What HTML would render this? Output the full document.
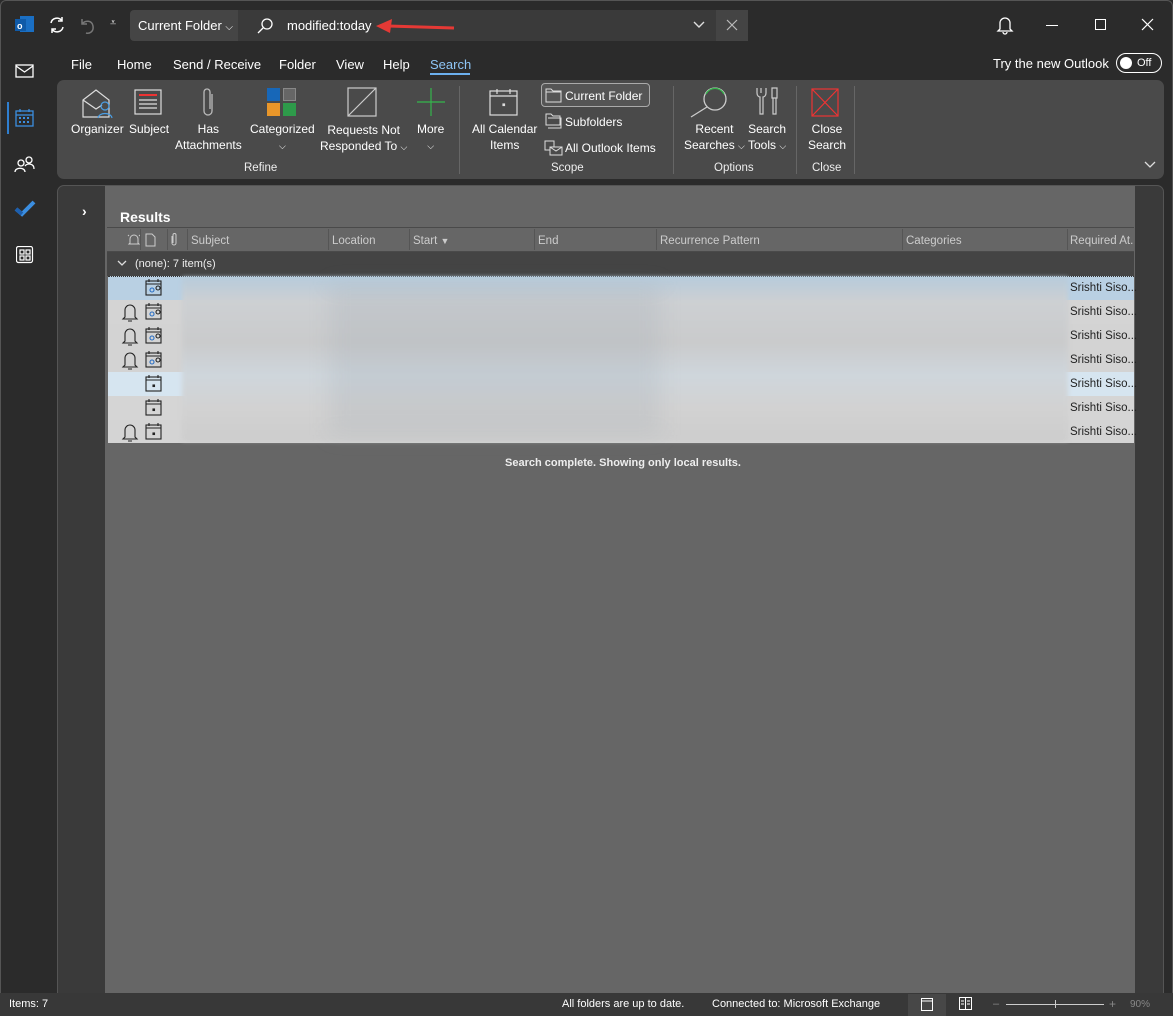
<!DOCTYPE html>
<html><head><meta charset="utf-8"><style>
*{box-sizing:border-box;margin:0;padding:0}
body{width:1173px;height:1016px;background:#2b2b2b;font-family:"Liberation Sans",sans-serif;color:#fff;position:relative;overflow:hidden;font-size:12px}
.a{position:absolute}
.tab{position:absolute;top:57px;font-size:13px;color:#fff}
.lbl{position:absolute;font-size:12px;color:#fff;text-align:center;line-height:16px;white-space:nowrap}
.grp{position:absolute;top:162px;font-size:11.5px;color:#eee}
.sep{position:absolute;top:86px;width:1px;height:88px;background:#666}
.hdr{position:absolute;top:235px;font-size:11.5px;color:#ccc}
.hsep{position:absolute;top:229px;width:1px;height:21px;background:#555}
.row{position:absolute;left:108px;width:1026px;height:24px}
.srs{position:absolute;left:1070px;font-size:11.5px;color:#222}
</style></head><body>
<div class="a" style="left:0;top:0;width:1173px;height:1016px;border:1px solid #555;border-radius:6px 6px 0 0"></div>
<svg class="a" style="left:14px;top:15px" width="22" height="20"><rect x="6" y="1" width="14" height="16" fill="#1a6fc4"/><rect x="1" y="4" width="11" height="12" fill="#0f5aa8"/><text x="3" y="14" font-size="9" fill="#fff" font-family="Liberation Sans" font-weight="bold">o</text></svg>
<svg class="a" style="left:47px;top:15px" width="20" height="20" fill="none" stroke="#fff" stroke-width="1.5"><path d="M4 8a6 6 0 0 1 11-2M16 12a6 6 0 0 1-11 2M15 2v4h-4M5 18v-4h4"/></svg>
<svg class="a" style="left:77px;top:15px" width="20" height="20" fill="none" stroke="#777" stroke-width="1.5"><path d="M5 4v5h5M5 9c3-4 10-4 11 2s-4 8-7 7"/></svg>
<div class="a" style="left:110px;top:17px;font-size:11px;color:#ddd">⩡</div>
<div class="a" style="left:130px;top:10px;width:108px;height:31px;background:#454545;border-radius:4px 0 0 4px;font-size:13px;padding:8px 0 0 8px">Current Folder <span style="font-size:10px">⌵</span></div>
<div class="a" style="left:238px;top:10px;width:510px;height:31px;background:#3a3a3a;border-radius:0 4px 4px 0"></div>
<div class="a" style="left:716px;top:10px;width:32px;height:31px;background:#444"></div>
<svg class="a" style="left:255px;top:16px" width="20" height="20" fill="none" stroke="#fff" stroke-width="1.3"><circle cx="12" cy="8" r="5"/><path d="M8 12l-5 5"/></svg>
<div class="a" style="left:287px;top:18px;font-size:13px;color:#fff">modified:today</div>
<svg class="a" style="left:374px;top:18px" width="84" height="16"><path d="M80 10L14 8" stroke="#e53935" stroke-width="3"/><path d="M2 8L18 1L16 15Z" fill="#e53935"/></svg>
<svg class="a" style="left:692px;top:19px" width="14" height="12" fill="none" stroke="#ddd" stroke-width="1.4"><path d="M2 3l5 5 5-5"/></svg>
<svg class="a" style="left:726px;top:19px" width="12" height="12" stroke="#bbb" stroke-width="1.2"><path d="M1 1l10 10M11 1L1 11"/></svg>
<svg class="a" style="left:996px;top:15px" width="18" height="20" fill="none" stroke="#fff" stroke-width="1.3"><path d="M4 14V8a5 5 0 0 1 10 0v6l2 2H2zM7 17a2 2 0 0 0 4 0"/></svg>
<div class="a" style="left:1046px;top:25px;width:12px;height:1px;background:#fff"></div>
<div class="a" style="left:1095px;top:19px;width:11px;height:11px;border:1px solid #fff"></div>
<svg class="a" style="left:1141px;top:18px" width="13" height="13" stroke="#fff" stroke-width="1.2"><path d="M1 1l11 11M12 1L1 12"/></svg>
<svg class="a" style="left:15px;top:63px" width="20" height="16" fill="none" stroke="#fff" stroke-width="1.3"><rect x="1" y="2" width="17" height="12"/><path d="M1 3l8.5 6L18 3"/></svg>
<div class="a" style="left:7px;top:102px;width:2px;height:32px;background:#2f7fd0"></div>
<svg class="a" style="left:15px;top:108px" width="20" height="20" fill="none" stroke="#3b8ee0" stroke-width="1.3"><rect x="1" y="3" width="17" height="15"/><path d="M1 7h17M5 1v3M14 1v3"/><g fill="#3b8ee0" stroke="none"><rect x="4" y="9" width="2" height="2"/><rect x="8" y="9" width="2" height="2"/><rect x="12" y="9" width="2" height="2"/><rect x="4" y="13" width="2" height="2"/><rect x="8" y="13" width="2" height="2"/><rect x="12" y="13" width="2" height="2"/></g></svg>
<svg class="a" style="left:14px;top:154px" width="22" height="20" fill="none" stroke="#fff" stroke-width="1.3"><circle cx="7" cy="9" r="3"/><circle cx="15" cy="6" r="3"/><path d="M1 18c0-5 10-5 10 0M11 12c2-3 9-3 9 3"/></svg>
<svg class="a" style="left:14px;top:200px" width="22" height="18"><path d="M2 9l6 5L20 2" stroke="#3b8ee0" stroke-width="4" fill="none"/><path d="M2 9l6 5" stroke="#1d5fae" stroke-width="4"/></svg>
<svg class="a" style="left:16px;top:246px" width="18" height="18" fill="none" stroke="#fff" stroke-width="1.2"><rect x="0.5" y="0.5" width="16" height="16" rx="2"/><rect x="4" y="4" width="4" height="4"/><rect x="10" y="4" width="4" height="4"/><rect x="4" y="10" width="4" height="4"/><rect x="10" y="10" width="4" height="4"/></svg>
<div class="tab" style="left:71px">File</div>
<div class="tab" style="left:117px">Home</div>
<div class="tab" style="left:173px">Send / Receive</div>
<div class="tab" style="left:279px">Folder</div>
<div class="tab" style="left:336px">View</div>
<div class="tab" style="left:383px">Help</div>
<div class="tab" style="left:430px;color:#8ec5f5">Search</div>
<div class="a" style="left:430px;top:73px;width:40px;height:2px;background:#6cb0ef"></div>
<div class="a" style="left:993px;top:56px;font-size:13px">Try the new Outlook</div>
<div class="a" style="left:1116px;top:53px;width:46px;height:20px;border:1px solid #fff;border-radius:10px"><div class="a" style="left:3px;top:3px;width:12px;height:12px;border-radius:6px;background:#fff"></div><span class="a" style="left:20px;top:3px;font-size:11px">Off</span></div>
<div class="a" style="left:57px;top:80px;width:1107px;height:99px;background:#4a4a4a;border-radius:7px"></div>
<svg class="a" style="left:81px;top:88px" width="34" height="32" fill="none" stroke="#ddd" stroke-width="1.2"><path d="M2 12L15 2l13 10v17H2zM2 12l13 9 6-4"/><circle cx="24" cy="18" r="4" stroke="#4a9fe6"/><path d="M17 30c1-6 13-6 14 0" stroke="#4a9fe6"/></svg>
<div class="lbl" style="left:71px;top:121px">Organizer</div>
<svg class="a" style="left:134px;top:88px" width="30" height="30" fill="none" stroke="#ddd" stroke-width="1.2"><rect x="1" y="2" width="26" height="24"/><path d="M5 7h18" stroke="#e33" stroke-width="2"/><path d="M5 12h18M5 16h18M5 20h18"/></svg>
<div class="lbl" style="left:129px;top:121px">Subject</div>
<svg class="a" style="left:199px;top:86px" width="20" height="32" fill="none" stroke="#bbb" stroke-width="1.3"><path d="M13 8v17a4 4 0 0 1-8 0V6a3 3 0 0 1 6 0v17"/></svg>
<div class="lbl" style="left:175px;top:121px">Has<br>Attachments</div>
<div class="a" style="left:267px;top:88px;width:13px;height:13px;background:#1767b8"></div><div class="a" style="left:283px;top:88px;width:13px;height:13px;background:#666;border:1px solid #888"></div>
<div class="a" style="left:267px;top:103px;width:13px;height:13px;background:#e8962a"></div><div class="a" style="left:283px;top:103px;width:13px;height:13px;background:#2e9a4a"></div>
<div class="lbl" style="left:250px;top:121px">Categorized<br><span style="font-size:9px">⌵</span></div>
<svg class="a" style="left:347px;top:87px" width="32" height="32" fill="none" stroke="#ccc" stroke-width="1.2"><rect x="1" y="1" width="28" height="28"/><path d="M1 29L29 1"/></svg>
<div class="lbl" style="left:320px;top:122px">Requests Not<br>Responded To <span style="font-size:9px">⌵</span></div>
<svg class="a" style="left:416px;top:87px" width="30" height="30" stroke="#35b64c" stroke-width="1.2"><path d="M15 1v28M1 15h28"/></svg>
<div class="lbl" style="left:417px;top:121px">More<br><span style="font-size:9px">⌵</span></div>
<div class="grp" style="left:244px">Refine</div>
<div class="sep" style="left:459px"></div>
<svg class="a" style="left:489px;top:88px" width="30" height="30" fill="none" stroke="#ddd" stroke-width="1.2"><rect x="1" y="3" width="27" height="24"/><path d="M1 8h27M8 1v5M21 1v5"/><rect x="14" y="16" width="1.5" height="1.5" fill="#ddd"/></svg>
<div class="lbl" style="left:472px;top:121px">All Calendar<br>Items</div>
<div class="a" style="left:541px;top:83px;width:109px;height:24px;border:1px solid #aaa;border-radius:4px;background:#555"></div>
<svg class="a" style="left:545px;top:88px" width="18" height="15" fill="none" stroke="#ddd"><path d="M1 1h5l2 2h8v11H1z"/><path d="M1 4h15"/></svg>
<div class="lbl" style="left:565px;top:88px">Current Folder</div>
<svg class="a" style="left:545px;top:113px" width="18" height="16" fill="none" stroke="#ddd"><path d="M1 1h5l2 2h7v9H1zM3 5h13v10H3"/></svg>
<div class="lbl" style="left:565px;top:114px">Subfolders</div>
<svg class="a" style="left:544px;top:139px" width="20" height="17" fill="none" stroke="#ddd"><rect x="1" y="2" width="9" height="9"/><rect x="6" y="8" width="12" height="8" fill="#4a4a4a"/><path d="M6 8l6 4 6-4"/></svg>
<div class="lbl" style="left:565px;top:140px">All Outlook Items</div>
<div class="grp" style="left:551px">Scope</div>
<div class="sep" style="left:673px"></div>
<svg class="a" style="left:688px;top:86px" width="42" height="32" fill="none" stroke="#ccc" stroke-width="1.3"><circle cx="27" cy="13" r="11" stroke="#ccc"/><path d="M18 8a10 10 0 0 1 18 0" stroke="#35b64c"/><path d="M19 21L3 31"/></svg>
<div class="lbl" style="left:684px;top:121px">Recent<br>Searches <span style="font-size:9px">⌵</span></div>
<svg class="a" style="left:755px;top:87px" width="24" height="30" fill="none" stroke="#ccc" stroke-width="1.2"><path d="M2 1v5c0 3 2 4 3 4v17h3V10c1 0 3-1 3-4V1M6 1v5M17 1h5v10h-5zM18 11v16h3V11"/></svg>
<div class="lbl" style="left:748px;top:121px">Search<br>Tools <span style="font-size:9px">⌵</span></div>
<div class="grp" style="left:714px">Options</div>
<div class="sep" style="left:796px"></div>
<svg class="a" style="left:811px;top:88px" width="28" height="29" fill="none" stroke="#e33" stroke-width="1.2"><rect x="1" y="1" width="26" height="27"/><path d="M1 1l26 27M27 1L1 28"/></svg>
<div class="lbl" style="left:808px;top:121px">Close<br>Search</div>
<div class="grp" style="left:812px">Close</div>
<div class="sep" style="left:854px"></div>
<svg class="a" style="left:1143px;top:160px" width="14" height="10" fill="none" stroke="#ddd" stroke-width="1.3"><path d="M2 2l5 5 5-5"/></svg>
<div class="a" style="left:57px;top:185px;width:1107px;height:820px;background:#3a3a3a;border:1px solid #555;border-radius:7px 7px 0 0"></div>
<div class="a" style="left:82px;top:203px;font-size:14px;font-weight:bold">›</div>
<div class="a" style="left:105px;top:186px;width:1030px;height:807px;background:#666"></div>
<div class="a" style="left:120px;top:209px;font-size:14px;font-weight:bold">Results</div>
<div class="a" style="left:107px;top:227px;width:1027px;height:1px;background:#4a4a4a"></div>
<div class="a" style="left:107px;top:251px;width:1027px;height:1px;background:#4a4a4a"></div>
<svg class="a" style="left:127px;top:232px" width="60" height="15" fill="none" stroke="#ccc"><path d="M3 11V7a4 4 0 0 1 8 0v4l1 1H2zM1 4l1-1M13 4l-1-1"/><path d="M19 2h6l3 3v9h-9z"/><path d="M45 4v7a2 2 0 0 0 4 0V3a1.5 1.5 0 0 0-3 0v8"/></svg>
<div class="hsep" style="left:140px"></div><div class="hsep" style="left:167px"></div><div class="hsep" style="left:187px"></div>
<div class="hdr" style="left:191px">Subject</div><div class="hsep" style="left:328px"></div>
<div class="hdr" style="left:332px">Location</div><div class="hsep" style="left:409px"></div>
<div class="hdr" style="left:413px">Start <span style="font-size:9px">▼</span></div><div class="hsep" style="left:534px"></div>
<div class="hdr" style="left:538px">End</div><div class="hsep" style="left:656px"></div>
<div class="hdr" style="left:660px">Recurrence Pattern</div><div class="hsep" style="left:902px"></div>
<div class="hdr" style="left:906px">Categories</div><div class="hsep" style="left:1067px"></div>
<div class="hdr" style="left:1070px">Required At.</div>
<div class="a" style="left:107px;top:252px;width:1027px;height:24px;background:#444"></div>
<svg class="a" style="left:117px;top:260px" width="10" height="8" fill="none" stroke="#ddd" stroke-width="1.3"><path d="M1 1l4 4 4-4"/></svg>
<div class="a" style="left:135px;top:258px;font-size:11px;color:#eee">(none): 7 item(s)</div>
<div class="row" style="top:276px;background:#b9d0e3;border-top:1px dotted #333"></div>
<div class="row" style="top:300px;background:#d4d4d4"></div>
<div class="row" style="top:324px;background:#d3d3d3"></div>
<div class="row" style="top:348px;background:#d3d3d3"></div>
<div class="row" style="top:372px;background:#d6e5f0"></div>
<div class="row" style="top:396px;background:#d5d5d5"></div>
<div class="row" style="top:420px;background:#d4d4d4;height:23px"></div>
<div class="a" style="left:182px;top:277px;width:886px;height:164px;background:linear-gradient(180deg,#b7cbdb 0%,#cdd0d3 15%,#cacbcc 40%,#cfd6dc 60%,#d2d2d2 80%,#cdcdcd 100%);filter:blur(2px)"></div>
<div class="a" style="left:330px;top:285px;width:330px;height:150px;background:rgba(150,160,170,.18);filter:blur(10px)"></div>
<svg class="a" style="left:118px;top:277px" width="50" height="166" fill="none" stroke="#222" stroke-width="1.1">
<g><rect x="28" y="4" width="15" height="14"/><path d="M28 7h15M31 2v3M40 2v3"/><circle cx="34" cy="13" r="2" stroke="#2a6fc4"/><circle cx="40" cy="11" r="2"/></g>
<g transform="translate(0,24)"><path d="M7 16V9a5 5 0 0 1 10 0v7l2 2H5zM10 20h4"/><rect x="28" y="4" width="15" height="14"/><path d="M28 7h15M31 2v3M40 2v3"/><circle cx="34" cy="13" r="2" stroke="#2a6fc4"/><circle cx="40" cy="11" r="2"/></g>
<g transform="translate(0,48)"><path d="M7 16V9a5 5 0 0 1 10 0v7l2 2H5zM10 20h4"/><rect x="28" y="4" width="15" height="14"/><path d="M28 7h15M31 2v3M40 2v3"/><circle cx="34" cy="13" r="2" stroke="#2a6fc4"/><circle cx="40" cy="11" r="2"/></g>
<g transform="translate(0,72)"><path d="M7 16V9a5 5 0 0 1 10 0v7l2 2H5zM10 20h4"/><rect x="28" y="4" width="15" height="14"/><path d="M28 7h15M31 2v3M40 2v3"/><circle cx="34" cy="13" r="2" stroke="#2a6fc4"/><circle cx="40" cy="11" r="2"/></g>
<g transform="translate(0,96)"><rect x="28" y="4" width="15" height="14"/><path d="M28 7h15M31 2v3M40 2v3"/><rect x="35" y="12" width="1.5" height="1.5" fill="#222"/></g>
<g transform="translate(0,120)"><rect x="28" y="4" width="15" height="14"/><path d="M28 7h15M31 2v3M40 2v3"/><rect x="35" y="12" width="1.5" height="1.5" fill="#222"/></g>
<g transform="translate(0,144)"><path d="M7 16V9a5 5 0 0 1 10 0v7l2 2H5zM10 20h4"/><rect x="28" y="4" width="15" height="14"/><path d="M28 7h15M31 2v3M40 2v3"/><rect x="35" y="12" width="1.5" height="1.5" fill="#222"/></g>
</svg>
<div class="srs" style="top:282px">Srishti Siso...</div>
<div class="srs" style="top:306px">Srishti Siso...</div>
<div class="srs" style="top:330px">Srishti Siso...</div>
<div class="srs" style="top:354px">Srishti Siso...</div>
<div class="srs" style="top:378px">Srishti Siso...</div>
<div class="srs" style="top:402px">Srishti Siso...</div>
<div class="srs" style="top:426px">Srishti Siso...</div>
<div class="a" style="left:505px;top:457px;font-size:11px;font-weight:bold;color:#eee">Search complete. Showing only local results.</div>
<div class="a" style="left:0;top:993px;width:1173px;height:23px;background:#383838"></div>
<div class="a" style="left:9px;top:998px;font-size:11px">Items: 7</div>
<div class="a" style="left:562px;top:998px;font-size:11px">All folders are up to date.</div>
<div class="a" style="left:712px;top:998px;font-size:11px">Connected to: Microsoft Exchange</div>
<div class="a" style="left:908px;top:994px;width:38px;height:22px;background:#474747"></div>
<svg class="a" style="left:920px;top:997px" width="14" height="15" fill="none" stroke="#fff"><rect x="1.5" y="1.5" width="11" height="12"/><path d="M1.5 4h11"/></svg>
<svg class="a" style="left:958px;top:996px" width="16" height="15" fill="none" stroke="#fff"><rect x="1.5" y="1.5" width="12" height="12"/><path d="M7.5 1.5v12M3 5h3M3 8h3M9 5h3M9 8h3"/></svg>
<div class="a" style="left:993px;top:998px;font-size:11px;color:#888">–</div>
<div class="a" style="left:1006px;top:1004px;width:98px;height:1px;background:#ccc"></div>
<div class="a" style="left:1055px;top:1000px;width:1px;height:8px;background:#ccc"></div>
<div class="a" style="left:1109px;top:997px;font-size:12px;color:#888">+</div>
<div class="a" style="left:1130px;top:999px;font-size:10px;color:#888">90%</div>
</body></html>
